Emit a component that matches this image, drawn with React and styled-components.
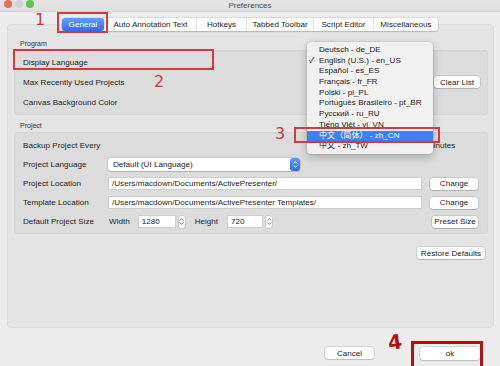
import React from 'react'
import styled, { createGlobalStyle, css } from 'styled-components'

const GlobalStyle = createGlobalStyle`
  html, body {
    margin: 0;
    padding: 0;
    background: #ececec;
  }
  body {
    font-family: 'Liberation Sans', Arial, sans-serif;
  }
`

const Window = styled.div`
  position: relative;
  width: 500px;
  height: 366px;
  overflow: hidden;
  background: #ececec;
  color: #1e1e1e;
  font-size: 8.1px;
  display: flex;
  flex-direction: column;
`

const TitleBar = styled.div`
  height: 11px;
  display: grid;
  grid-template-columns: 1fr auto 1fr;
  align-items: center;
  background: linear-gradient(#e6e6e6, #dfdfdf);
  border-bottom: 1px solid #d2d2d2;
`

const Lights = styled.div`
  display: flex;
  gap: 3px;
  padding-left: 4px;
  margin-top: -3px;
`

const Light = styled.span`
  width: 8px;
  height: 8px;
  border-radius: 50%;
  background: ${p => p.$color};
`

const Title = styled.div`
  font-size: 8px;
  color: #4b4b4b;
`

const TabBar = styled.div`
  position: relative;
  z-index: 1;
  display: flex;
  align-self: center;
  height: 13px;
  margin-top: 6px;
  background: #fff;
  border-radius: 3px;
  box-shadow: 0 0 0 0.5px rgba(0, 0, 0, 0.15), 0 1px 1px rgba(0, 0, 0, 0.12);
`

const Tab = styled.div`
  width: ${p => p.$w}px;
  display: flex;
  align-items: center;
  justify-content: center;
  white-space: nowrap;
  color: #1e1e1e;
  & + & {
    border-left: 1px solid #e2e2e2;
  }
  ${p => p.$active && css`
    background: linear-gradient(#62a0f8, #2d6fea);
    color: #fff;
    border-radius: 3px;
  `}
`

const Panel = styled.div`
  height: 304px;
  box-sizing: border-box;
  margin: -7px 6px 0 7px;
  padding: 14px 5px 0 6px;
  background: #e4e4e4;
  border: 1px solid #dcdcdc;
  border-radius: 4px;
  display: flex;
  flex-direction: column;
`

const GroupLabel = styled.div`
  font-size: 7px;
  line-height: 10px;
  padding-left: 6px;
  margin-top: ${p => p.$top || 0}px;
  margin-bottom: 1px;
  color: #333;
`

const GroupBox = styled.div`
  display: flex;
  flex-direction: column;
  padding: ${p => p.$pad};
  background: #dcdcdc;
  border: 1px solid #d5d5d5;
  border-radius: 3px;
`

const Row = styled.div`
  display: flex;
  align-items: center;
  height: ${p => p.$h}px;
  padding: 0 ${p => p.$right || 9}px 0 8px;
`

const Label = styled.div`
  width: ${p => (p.$w ? `${p.$w}px` : 'auto')};
  flex-shrink: 0;
  white-space: nowrap;
`

const Text = styled.span`
  white-space: nowrap;
  margin: 0 ${p => p.$mr || 0}px 0 ${p => p.$ml || 0}px;
`

const Field = styled.div`
  height: 13px;
  box-sizing: border-box;
  width: ${p => (p.$w ? `${p.$w}px` : 'auto')};
  flex: ${p => (p.$grow ? 1 : 'none')};
  padding: 0 3px;
  line-height: 11px;
  background: #fff;
  border: 1px solid #cfcfcf;
  white-space: nowrap;
  overflow: hidden;
`

const Select = styled.div`
  width: 192px;
  height: 13px;
  box-sizing: border-box;
  display: flex;
  align-items: center;
  justify-content: space-between;
  padding-left: 5px;
  background: #fff;
  border-radius: 3px;
  box-shadow: 0 0 0 0.5px rgba(0, 0, 0, 0.18), 0 1px 1px rgba(0, 0, 0, 0.1);
`

const SelectArrows = styled.div`
  width: 10px;
  height: 13px;
  display: flex;
  align-items: center;
  justify-content: center;
  background: linear-gradient(#5c9cf8, #2e70ea);
  border-radius: 3px;
`

const Stepper = styled.div`
  width: 6px;
  height: 12px;
  margin: 0 ${p => p.$mr}px 0 3px;
  display: flex;
  align-items: center;
  justify-content: center;
  background: #fff;
  border-radius: 2px;
  box-shadow: 0 0 0 0.5px rgba(0, 0, 0, 0.15);
`

const Button = styled.div`
  width: ${p => p.$w}px;
  height: ${p => p.$h || 12}px;
  flex-shrink: 0;
  margin-left: ${p => (p.$auto ? 'auto' : `${p.$ml || 0}px`)};
  display: flex;
  align-items: center;
  justify-content: center;
  background: #fff;
  border-radius: 3px;
  box-shadow: 0 0 0 0.5px rgba(0, 0, 0, 0.18), 0 1px 1px rgba(0, 0, 0, 0.12);
  white-space: nowrap;
  color: #1e1e1e;
`

const PanelActions = styled.div`
  display: flex;
  justify-content: flex-end;
  margin: 13px 3px 0 0;
`

const Footer = styled.div`
  display: flex;
  justify-content: flex-end;
  gap: 46px;
  padding: 19px 20px 0 0;
`

const Menu = styled.div`
  position: absolute;
  left: 307px;
  top: 42px;
  width: 126px;
  padding: 3px 0 2px;
  background: #f1f1f1;
  border-radius: 4px;
  box-shadow: 0 0 0 0.5px rgba(0, 0, 0, 0.12), 0 3px 8px rgba(0, 0, 0, 0.25);
  z-index: 5;
`

const MenuItem = styled.div`
  position: relative;
  height: 10.7px;
  line-height: 10.7px;
  padding-left: 12px;
  white-space: nowrap;
  font-family: 'Liberation Sans', 'Noto Sans CJK SC', sans-serif;
  color: #1e1e1e;
  ${p => p.$selected && css`
    background: #3f80f4;
    color: #fff;
  `}
`

const Check = styled.span`
  position: absolute;
  left: 2px;
  top: 0;
`

const Mark = styled.div`
  position: absolute;
  left: ${p => p.$x}px;
  top: ${p => p.$y}px;
  width: ${p => p.$w}px;
  height: ${p => p.$h}px;
  box-sizing: border-box;
  border: ${p => p.$b || 2}px solid ${p => p.$c || '#d8383d'};
  z-index: 10;
`

const Num = styled.div`
  position: absolute;
  left: ${p => p.$x}px;
  top: ${p => p.$y}px;
  font-family: 'DejaVu Sans', sans-serif;
  font-size: ${p => p.$size || 16}px;
  line-height: 1;
  color: ${p => p.$c || '#d23a3d'};
  font-weight: ${p => p.$weight || 400};
  transform: rotate(${p => p.$rot || 0}deg);
  z-index: 10;
`

const UpDown = ({ color = '#777' }) => (
  <svg width="5" height="9" viewBox="0 0 5 9">
    <path d="M1 3.3 L2.5 1.6 L4 3.3 M1 5.7 L2.5 7.4 L4 5.7" fill="none" stroke={color} strokeWidth="0.9" strokeLinecap="round" strokeLinejoin="round" />
  </svg>
)

const languages = [
  'Deutsch - de_DE',
  'English (U.S.) - en_US',
  'Español - es_ES',
  'Français - fr_FR',
  'Polski - pl_PL',
  'Português Brasileiro - pt_BR',
  'Русский - ru_RU',
  'Tiếng Việt - vi_VN',
  '中文（简体） - zh_CN',
  '中文 - zh_TW'
]

const tabs = [
  ['General', 42],
  ['Auto Annotation Text', 91],
  ['Hotkeys', 49],
  ['Tabbed Toolbar', 66],
  ['Script Editor', 59],
  ['Miscellaneous', 64]
]

export default function App () {
  return (
    <Window>
      <GlobalStyle />
      <TitleBar>
        <Lights>
          <Light $color="#ee6a5f" />
          <Light $color="#d3d3d3" />
          <Light $color="#5fc454" />
        </Lights>
        <Title>Preferences</Title>
        <div />
      </TitleBar>

      <TabBar>
        {tabs.map(([name, w], i) => (
          <Tab key={name} $w={w} $active={i === 0}>{name}</Tab>
        ))}
      </TabBar>

      <Panel>
        <GroupLabel>Program</GroupLabel>
        <GroupBox $pad="1px 0 2px">
          <Row $h={20} $right={7}><Label>Display Language</Label></Row>
          <Row $h={20} $right={7}>
            <Label>Max Recently Used Projects</Label>
            <Button $w={46} $auto>Clear List</Button>
          </Row>
          <Row $h={20} $right={7}><Label>Canvas Background Color</Label></Row>
        </GroupBox>

        <GroupLabel $top={6}>Project</GroupLabel>
        <GroupBox $pad="3px 0 2px">
          <Row $h={19}>
            <Label $w={85}>Backup Project Every</Label>
            <Text $ml={319}>minutes</Text>
          </Row>
          <Row $h={19}>
            <Label $w={85}>Project Language</Label>
            <Select>
              <span>Default (UI Language)</span>
              <SelectArrows><UpDown color="#fff" /></SelectArrows>
            </Select>
          </Row>
          <Row $h={19}>
            <Label $w={85}>Project Location</Label>
            <Field $grow>/Users/macdown/Documents/ActivePresenter/</Field>
            <Button $w={48} $ml={8}>Change</Button>
          </Row>
          <Row $h={19}>
            <Label $w={85}>Template Location</Label>
            <Field $grow>/Users/macdown/Documents/ActivePresenter Templates/</Field>
            <Button $w={48} $ml={8}>Change</Button>
          </Row>
          <Row $h={19}>
            <Label $w={85}>Default Project Size</Label>
            <Text $ml={1} $mr={8}>Width</Text>
            <Field $w={38}>1280</Field>
            <Stepper $mr={10}><UpDown /></Stepper>
            <Text $mr={9}>Height</Text>
            <Field $w={36}>720</Field>
            <Stepper $mr={0}><UpDown /></Stepper>
            <Button $w={46} $auto>Preset Size</Button>
          </Row>
        </GroupBox>

        <PanelActions>
          <Button $w={68}>Restore Defaults</Button>
        </PanelActions>
      </Panel>

      <Footer>
        <Button $w={49}>Cancel</Button>
        <Button $w={60} $h={13}>ok</Button>
      </Footer>

      <Menu>
        {languages.map((lang, i) => (
          <MenuItem key={lang} $selected={i === 8}>
            {i === 1 && <Check>✓</Check>}
            {lang}
          </MenuItem>
        ))}
      </Menu>

      <Mark $x={57} $y={12} $w={51} $h={21} />
      <Num $x={35} $y={12}>1</Num>
      <Mark $x={13} $y={49} $w={201} $h={21} />
      <Num $x={154} $y={74}>2</Num>
      <Mark $x={294} $y={127} $w={146} $h={16} />
      <Num $x={275} $y={126}>3</Num>
      <Mark $x={411} $y={341} $w={72} $h={28} $b={3} $c="#b40f12" />
      <Num $x={388} $y={332} $size={20} $weight={700} $rot={-8} $c="#b40f12">4</Num>
    </Window>
  )
}
